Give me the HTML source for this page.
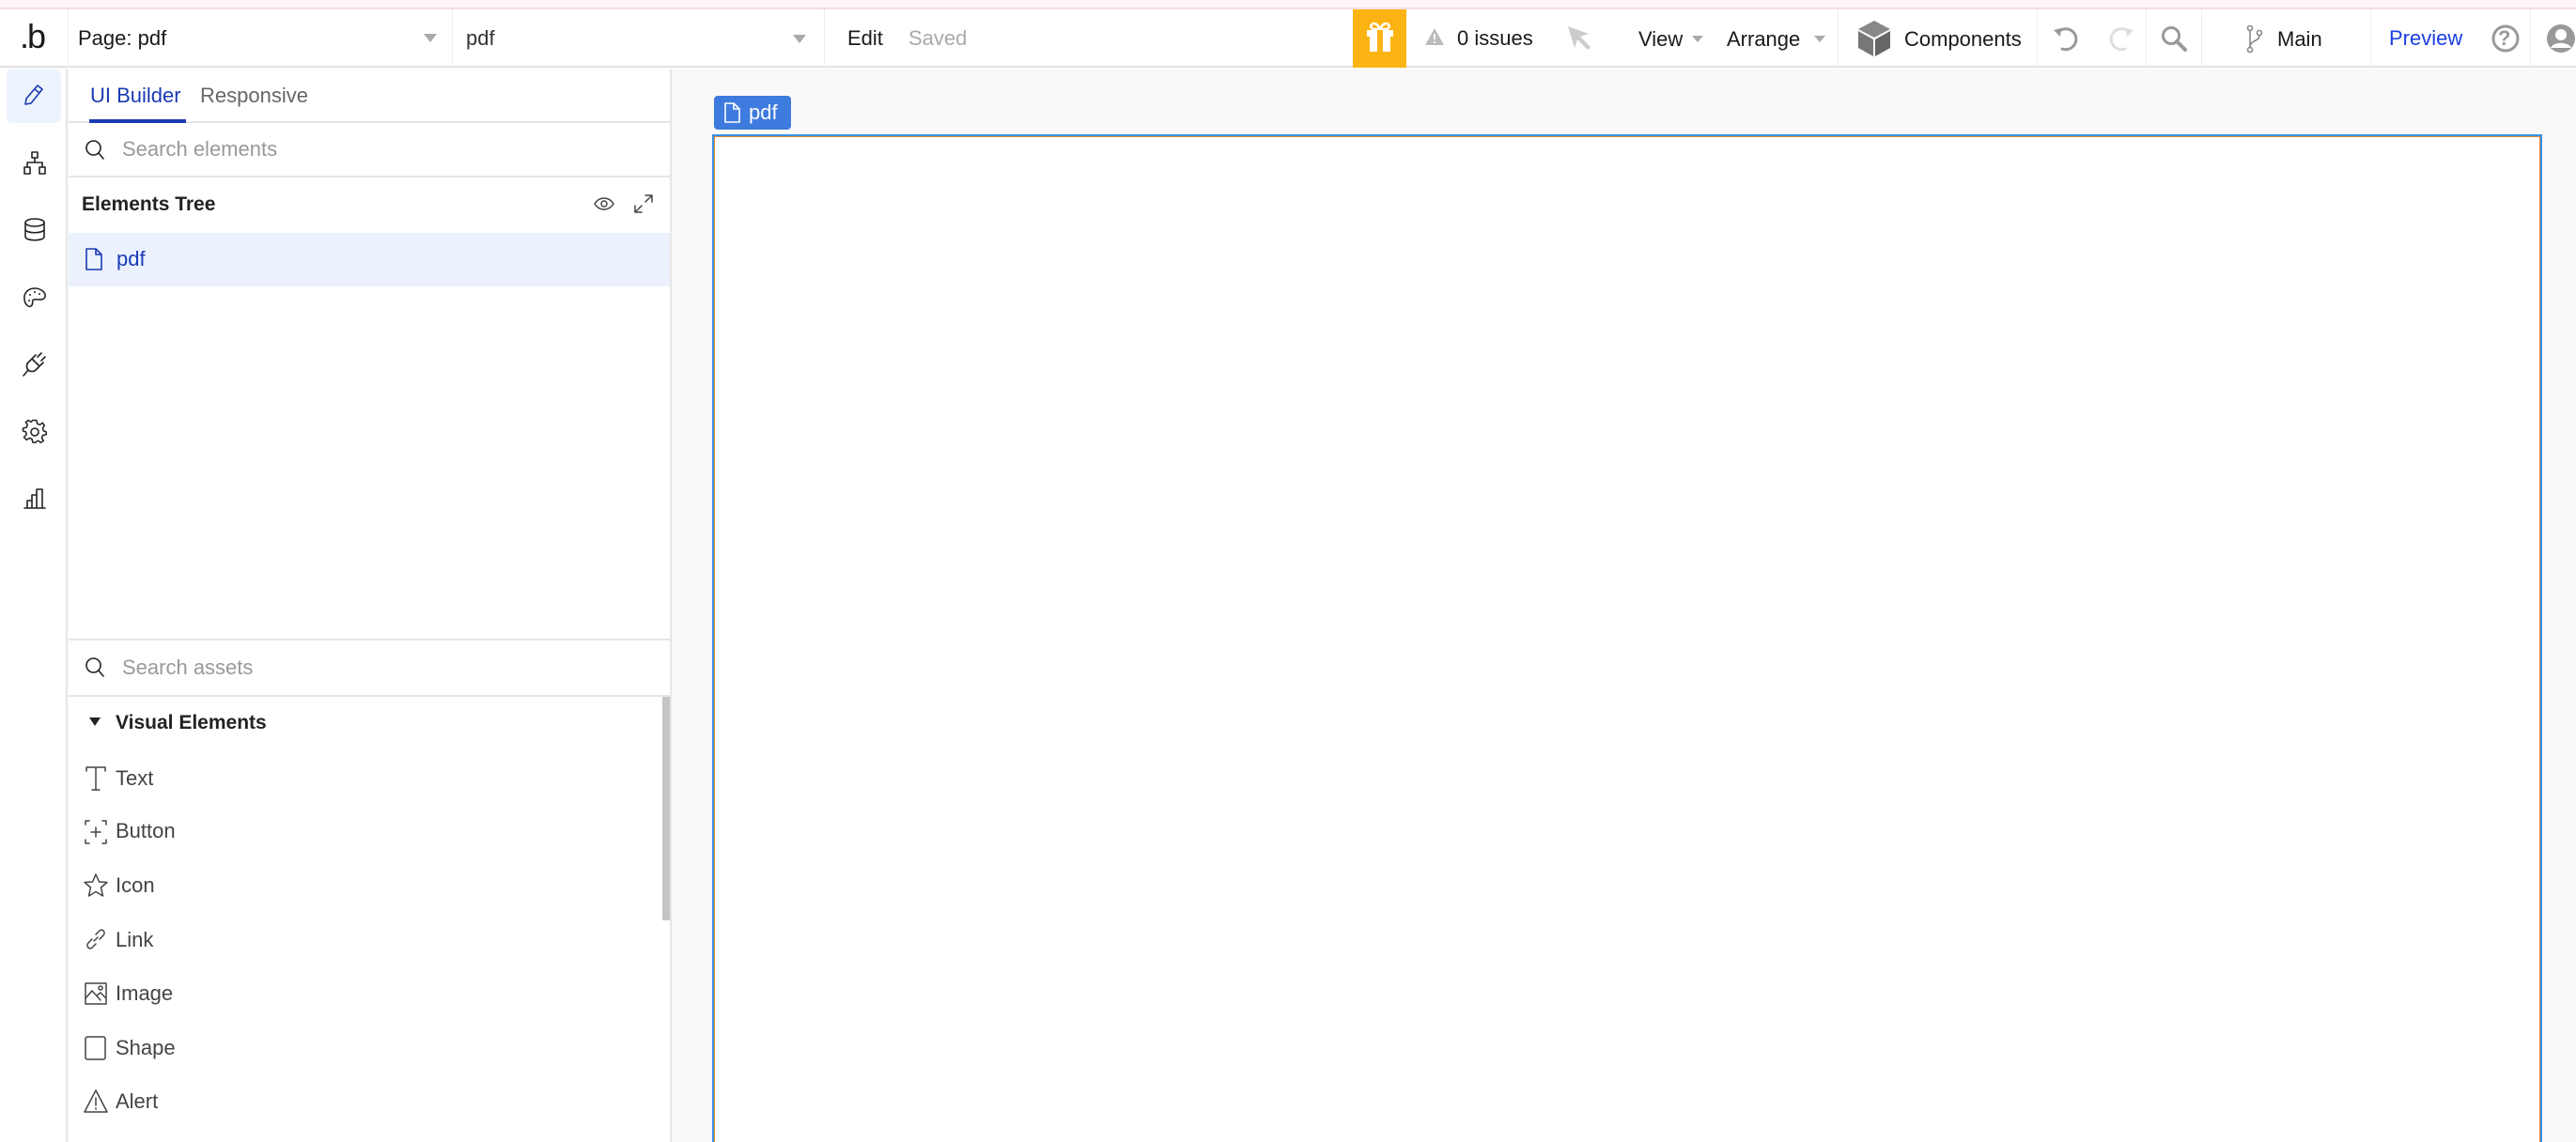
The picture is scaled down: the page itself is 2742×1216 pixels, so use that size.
<!DOCTYPE html>
<html><head><meta charset="utf-8"><style>
*{box-sizing:border-box;margin:0;padding:0}
html,body{width:2742px;height:1216px;overflow:hidden}
body{background:#f9f9f9;font-family:"Liberation Sans",sans-serif;color:#1a1a1a;position:relative}
.a{position:absolute}
.t{position:absolute;font-size:22px;line-height:1;white-space:nowrap}
svg{position:absolute;overflow:visible}
.ic{fill:none;stroke:#222;stroke-width:1.6;stroke-linecap:round;stroke-linejoin:round}
.gi{fill:none;stroke:#444;stroke-width:1.5;stroke-linecap:round;stroke-linejoin:round}
.vs{position:absolute;top:10px;height:62px;width:1px;background:#ececec}
</style></head><body>
<div class="a" style="left:0;top:0;width:2742px;height:8px;background:#fff6f8"></div>
<div class="a" style="left:0;top:8px;width:2742px;height:2px;background:#f3dfe3"></div>
<div class="a" style="left:0;top:10px;width:2742px;height:62px;background:#fff;border-bottom:2px solid #e3e3e3"></div>
<div class="t" style="left:21px;top:21px;font-size:36px;letter-spacing:-2px">.b</div>
<div class="vs" style="left:72px"></div>
<div class="t" style="left:83px;top:30px">Page: pdf</div>
<svg style="left:451px;top:36px" width="14" height="10"><path d="M0 0H14L7 9Z" fill="#aaa"/></svg>
<div class="vs" style="left:481px"></div>
<div class="t" style="left:496px;top:30px;color:#333">pdf</div>
<svg style="left:844px;top:37px" width="14" height="10"><path d="M0 0H14L7 9Z" fill="#aaa"/></svg>
<div class="vs" style="left:877px"></div>
<div class="t" style="left:902px;top:30px">Edit</div>
<div class="t" style="left:967px;top:30px;color:#aaa">Saved</div>
<div class="a" style="left:1440px;top:10px;width:57px;height:62px;background:#fcb414"></div>
<svg style="left:1454px;top:23px" width="30" height="34"><path d="M9 2c-5 0-5 6 0 6h6M21 2c5 0 5 6 0 6h-6M15 8c-2-4-4-6-6-6M15 8c2-4 4-6 6-6" fill="none" stroke="#fff" stroke-width="2.5"/><rect x="1" y="9" width="28" height="7" fill="#fff"/><rect x="4" y="16" width="22" height="16" fill="#fff"/><rect x="12" y="9" width="6" height="23" fill="#fcb414"/></svg>
<svg style="left:1517px;top:30px" width="20" height="18"><path d="M10 0L20 18H0Z" fill="#bbb"/><path d="M10 6V12M10 14V16" stroke="#fff" stroke-width="2"/></svg>
<div class="t" style="left:1551px;top:30px">0 issues</div>
<svg style="left:1669px;top:28px" width="26" height="26"><path d="M0 0L22 8L13 11L24 22L21 25L10 14L7 23Z" fill="#ccc"/></svg>
<div class="t" style="left:1744px;top:31px">View</div>
<svg style="left:1801px;top:38px" width="12" height="8"><path d="M0 0H12L6 7Z" fill="#aaa"/></svg>
<div class="t" style="left:1838px;top:31px">Arrange</div>
<svg style="left:1931px;top:38px" width="12" height="8"><path d="M0 0H12L6 7Z" fill="#aaa"/></svg>
<div class="vs" style="left:1956px"></div>
<svg style="left:1978px;top:22px" width="34" height="38"><path d="M17 0L34 9L17 18L0 9Z" fill="#888"/><path d="M0 11L16 20V38L0 29Z" fill="#777"/><path d="M34 11L18 20V38L34 29Z" fill="#666"/></svg>
<div class="t" style="left:2027px;top:31px">Components</div>
<div class="vs" style="left:2168px"></div>
<svg style="left:2185px;top:27px" width="30" height="28"><path d="M6 7A11 11 0 1 1 10 25" class="ic" style="stroke:#999;stroke-width:3"/><path d="M1 5L8 12L9 3Z" fill="#999"/></svg>
<svg style="left:2242px;top:27px" width="30" height="28"><path d="M24 7A11 11 0 1 0 20 25" class="ic" style="stroke:#ddd;stroke-width:3"/><path d="M29 5L22 12L21 3Z" fill="#ddd"/></svg>
<div class="vs" style="left:2284px"></div>
<svg style="left:2300px;top:27px" width="30" height="30"><circle cx="11" cy="11" r="8.5" class="ic" style="stroke:#999;stroke-width:3"/><path d="M17 17L26 26" class="ic" style="stroke:#999;stroke-width:4"/></svg>
<div class="vs" style="left:2343px"></div>
<svg style="left:2391px;top:27px" width="20" height="30"><circle cx="4" cy="3" r="2.5" class="ic" style="stroke:#888"/><circle cx="14" cy="8" r="2.5" class="ic" style="stroke:#888"/><circle cx="4" cy="26" r="2.5" class="ic" style="stroke:#888"/><path d="M4 6V23M14 11C14 17 4 16 4 23" class="ic" style="stroke:#888"/></svg>
<div class="t" style="left:2424px;top:31px">Main</div>
<div class="vs" style="left:2523px"></div>
<div class="t" style="left:2543px;top:30px;color:#1a3ee0">Preview</div>
<svg style="left:2652px;top:26px" width="30" height="30"><circle cx="15" cy="15" r="13" class="ic" style="stroke:#999;stroke-width:3"/></svg>
<div class="t" style="left:2659px;top:30px;color:#999;font-weight:bold;font-size:22px">?</div>
<div class="vs" style="left:2693px"></div>
<svg style="left:2710px;top:25px" width="32" height="32"><circle cx="16" cy="16" r="15" fill="#999"/><circle cx="16" cy="12" r="6" fill="#fff"/><path d="M5 26C8 19 24 19 27 26" fill="#fff"/></svg>
<div class="a" style="left:0;top:74px;width:72px;height:1142px;background:#fff;border-right:2px solid #e6e6e6"></div>
<div class="a" style="left:7px;top:74px;width:58px;height:57px;background:#edf3fd;border-radius:6px"></div>
<svg style="left:26px;top:89px" width="22" height="24"><path d="M14 2L19 6L7 21L1 22L2 16Z M11 6L16 10" class="ic" style="stroke:#1a3ab5"/></svg>
<svg style="left:25px;top:161px" width="24" height="26"><rect x="9" y="1" width="6" height="6" class="ic"/><path d="M12 7V12M4 17V12H20V17" class="ic"/><rect x="1" y="17" width="6" height="7" class="ic"/><rect x="17" y="17" width="6" height="7" class="ic"/></svg>
<svg style="left:25px;top:232px" width="24" height="26"><ellipse cx="12" cy="5" rx="10" ry="4" class="ic"/><path d="M2 5V20C2 25 22 25 22 20V5M2 12C2 17 22 17 22 12" class="ic"/></svg>
<svg style="left:24px;top:305px" width="26" height="24"><path d="M13 2C5 2 1 8 2 14C3 21 8 23 10 20C12 17 9 15 12 14C15 13 22 16 24 11C25 6 19 2 13 2Z" class="ic"/><circle cx="8" cy="9" r="1" fill="#222"/><circle cx="13" cy="6" r="1" fill="#222"/><circle cx="18" cy="8" r="1" fill="#222"/><circle cx="7" cy="15" r="1" fill="#222"/></svg>
<svg style="left:24px;top:374px" width="26" height="28"><path d="M10 8L18 16L14 20C12 22 8 22 6 20C4 18 4 14 6 12Z M14 4L11 7M22 12L19 15M6 20L1 26M16 6L20 2M20 10L24 6" class="ic"/></svg>
<svg style="left:24px;top:447px" width="26" height="26"><path d="M11 1H15L16 5L19 6L22 4L24 7L22 10L23 13L26 14V17L22 18L21 21L23 24L20 26L17 24L15 25L14 26H11L10 22L7 21L4 23L1 20L4 17L3 14L0 13V10L4 9L5 6L3 3L6 1L9 3Z" class="ic" transform="translate(0.5 -0.5) scale(0.95)"/><circle cx="13" cy="13" r="4" class="ic"/></svg>
<svg style="left:25px;top:519px" width="24" height="24"><path d="M1 22H23M4 22V14H9V22M9 22V8H14V22M14 22V2H20V22" class="ic"/></svg>
<div class="a" style="left:73px;top:74px;width:642px;height:1142px;background:#fff;border-right:2px solid #e6e6e6"></div>
<div class="t" style="left:96px;top:91px;color:#1a3ab5">UI Builder</div>
<div class="t" style="left:213px;top:91px;color:#666">Responsive</div>
<div class="a" style="left:73px;top:129px;width:640px;height:2px;background:#e8e4e6"></div>
<div class="a" style="left:95px;top:127px;width:103px;height:4px;background:#1a3ab5"></div>
<svg style="left:90px;top:148px" width="22" height="24"><circle cx="9.5" cy="9.5" r="7.5" class="ic"/><path d="M15 15L20 21" class="ic"/></svg>
<div class="t" style="left:130px;top:148px;color:#999">Search elements</div>
<div class="a" style="left:73px;top:187px;width:640px;height:2px;background:#e8e4e6"></div>
<div class="t" style="left:87px;top:207px;font-weight:bold;font-size:21px;color:#222">Elements Tree</div>
<svg style="left:632px;top:209px" width="22" height="16"><path d="M1 8C6 0 16 0 21 8C16 16 6 16 1 8Z" class="gi"/><circle cx="11" cy="8" r="3" class="gi"/></svg>
<svg style="left:675px;top:207px" width="20" height="20"><path d="M12 1H19V8M19 1L12 8M8 19H1V12M1 19L8 12" class="gi"/></svg>
<div class="a" style="left:73px;top:248px;width:640px;height:57px;background:#ebf2fd"></div>
<svg style="left:91px;top:264px" width="18" height="24"><path d="M1 1H11L17 7V23H1Z M11 1V7H17" fill="none" stroke="#1a3ab5" stroke-width="1.6" stroke-linejoin="round"/></svg>
<div class="t" style="left:124px;top:265px;color:#1a3ab5">pdf</div>
<div class="a" style="left:73px;top:680px;width:640px;height:2px;background:#e8e4e6"></div>
<svg style="left:90px;top:699px" width="22" height="24"><circle cx="9.5" cy="9.5" r="7.5" class="ic"/><path d="M15 15L20 21" class="ic"/></svg>
<div class="t" style="left:130px;top:700px;color:#999">Search assets</div>
<div class="a" style="left:73px;top:740px;width:640px;height:2px;background:#e8e4e6"></div>
<div class="a" style="left:705px;top:742px;width:8px;height:238px;background:#c4c4c4"></div>
<svg style="left:95px;top:764px" width="12" height="10"><path d="M0 0H12L6 9Z" fill="#222"/></svg>
<div class="t" style="left:123px;top:759px;font-weight:bold;font-size:21px;color:#222">Visual Elements</div>
<svg style="left:91px;top:816px" width="22" height="26"><path d="M1 5V1H21V5M11 1V25M7 25H15" class="gi"/></svg>
<div class="t" style="left:123px;top:818px;color:#444">Text</div>
<svg style="left:90px;top:873px" width="24" height="26"><path d="M5 1H1V5M19 1H23V5M5 25H1V21M19 25H23V21M12 8V18M7 13H17" class="gi"/></svg>
<div class="t" style="left:123px;top:874px;color:#444">Button</div>
<svg style="left:89px;top:930px" width="26" height="26"><path d="M13 1L16.5 9L25 9.5L18.5 15L20.5 24L13 19.5L5.5 24L7.5 15L1 9.5L9.5 9Z" class="gi"/></svg>
<div class="t" style="left:123px;top:932px;color:#444">Icon</div>
<svg style="left:90px;top:988px" width="24" height="26"><path d="M10 14L14 10M8 12L4 16C1 19 5 24 8 21L12 17M16 12L20 8C23 5 19 0 16 3L12 7" class="gi"/></svg>
<div class="t" style="left:123px;top:990px;color:#444">Link</div>
<svg style="left:90px;top:1046px" width="24" height="24"><rect x="1" y="1" width="22" height="22" class="gi"/><path d="M1 17L8 9L17 19M13 14L17 11L23 17" class="gi"/><circle cx="17" cy="6" r="2" class="gi"/></svg>
<div class="t" style="left:123px;top:1047px;color:#444">Image</div>
<svg style="left:90px;top:1103px" width="24" height="26"><rect x="1" y="1" width="21" height="24" rx="2" class="gi"/></svg>
<div class="t" style="left:123px;top:1105px;color:#444">Shape</div>
<svg style="left:89px;top:1160px" width="26" height="26"><path d="M13 1L25 24H1Z M13 9V17M13 20V21" class="gi"/></svg>
<div class="t" style="left:123px;top:1162px;color:#444">Alert</div>
<div class="a" style="left:760px;top:102px;width:82px;height:36px;background:#3e7bde;border-radius:4px"></div>
<svg style="left:771px;top:109px" width="18" height="22"><path d="M1 1H10L16 7V21H1Z M10 1V7H16" fill="none" stroke="#fff" stroke-width="1.6" stroke-linejoin="round"/></svg>
<div class="t" style="left:797px;top:109px;color:#fff">pdf</div>
<div class="a" style="left:758px;top:143px;width:1948px;height:1073px;border:2px solid #3991e8;border-bottom:none;background:#fff"><div style="width:100%;height:100%;border:1px solid #e3872a;border-bottom:none"></div></div>
</body></html>
